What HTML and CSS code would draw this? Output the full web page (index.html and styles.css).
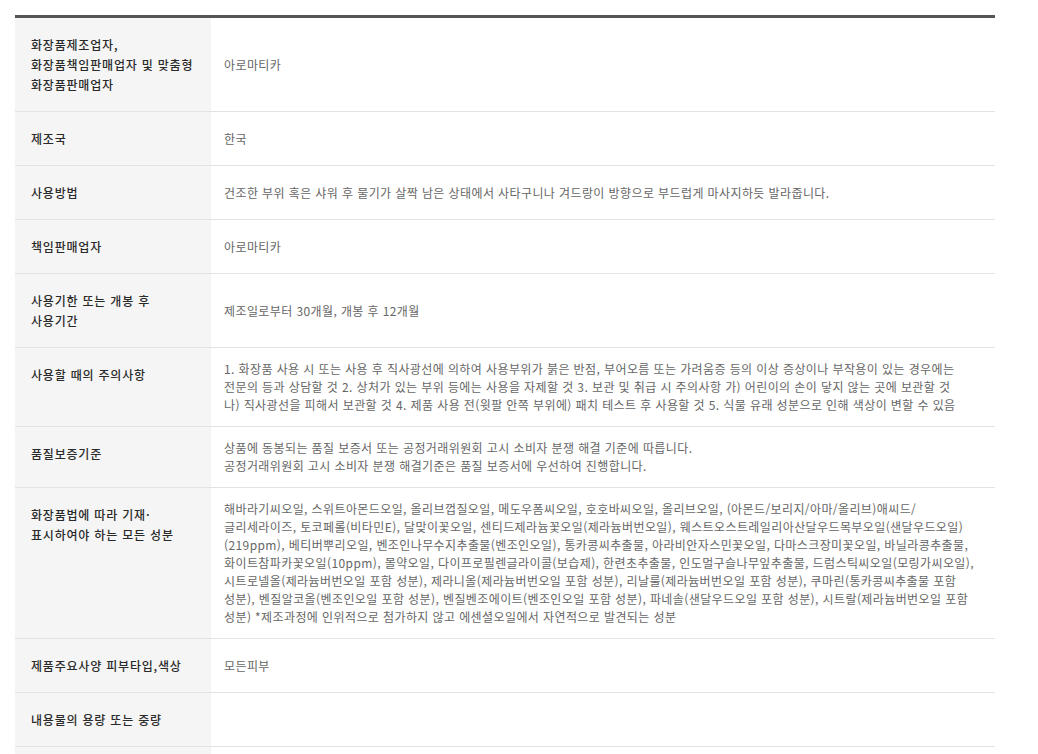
FILE: index.html
```html
<!DOCTYPE html>
<html lang="ko">
<head>
    <meta charset="UTF-8">
    <meta name="viewport" content="width=device-width, initial-scale=1.0">
    <title>상품정보제공고시</title>
    <link rel="stylesheet" href="styles.css">
</head>
<body>
    <div class="container">
        <table class="info-table">
            <tr>
                <th>화장품제조업자,<br>화장품책임판매업자 및 맞춤형<br>화장품판매업자</th>
                <td>아로마티카</td>
            </tr>
            <tr>
                <th>제조국</th>
                <td>한국</td>
            </tr>
            <tr>
                <th>사용방법</th>
                <td>건조한 부위 혹은 샤워 후 물기가 살짝 남은 상태에서 사타구니나 겨드랑이 방향으로 부드럽게 마사지하듯 발라줍니다.</td>
            </tr>
            <tr>
                <th>책임판매업자</th>
                <td>아로마티카</td>
            </tr>
            <tr>
                <th>사용기한 또는 개봉 후<br>사용기간</th>
                <td>제조일로부터 30개월, 개봉 후 12개월</td>
            </tr>
            <tr>
                <th>사용할 때의 주의사항</th>
                <td>1. 화장품 사용 시 또는 사용 후 직사광선에 의하여 사용부위가 붉은 반점, 부어오름 또는 가려움증 등의 이상 증상이나 부작용이 있는 경우에는<br>전문의 등과 상담할 것 2. 상처가 있는 부위 등에는 사용을 자제할 것 3. 보관 및 취급 시 주의사항 가) 어린이의 손이 닿지 않는 곳에 보관할 것<br>나) 직사광선을 피해서 보관할 것 4. 제품 사용 전(윗팔 안쪽 부위에) 패치 테스트 후 사용할 것 5. 식물 유래 성분으로 인해 색상이 변할 수 있음</td>
            </tr>
            <tr>
                <th>품질보증기준</th>
                <td>상품에 동봉되는 품질 보증서 또는 공정거래위원회 고시 소비자 분쟁 해결 기준에 따릅니다.<br>공정거래위원회 고시 소비자 분쟁 해결기준은 품질 보증서에 우선하여 진행합니다.</td>
            </tr>
            <tr>
                <th>화장품법에 따라 기재·<br>표시하여야 하는 모든 성분</th>
                <td>해바라기씨오일, 스위트아몬드오일, 올리브껍질오일, 메도우폼씨오일, 호호바씨오일, 올리브오일, (아몬드/보리지/아마/올리브)애씨드/<br>글리세라이즈, 토코페롤(비타민E), 달맞이꽃오일, 센티드제라늄꽃오일(제라늄버번오일), 웨스트오스트레일리아산달우드목부오일(샌달우드오일)<br>(219ppm), 베티버뿌리오일, 벤조인나무수지추출물(벤조인오일), 통카콩씨추출물, 아라비안자스민꽃오일, 다마스크장미꽃오일, 바닐라콩추출물,<br>화이트참파카꽃오일(10ppm), 몰약오일, 다이프로필렌글라이콜(보습제), 한련초추출물, 인도멀구슬나무잎추출물, 드럼스틱씨오일(모링가씨오일),<br>시트로넬올(제라늄버번오일 포함 성분), 제라니올(제라늄버번오일 포함 성분), 리날룰(제라늄버번오일 포함 성분), 쿠마린(통카콩씨추출물 포함<br>성분), 벤질알코올(벤조인오일 포함 성분), 벤질벤조에이트(벤조인오일 포함 성분), 파네솔(샌달우드오일 포함 성분), 시트랄(제라늄버번오일 포함<br>성분) *제조과정에 인위적으로 첨가하지 않고 에센셜오일에서 자연적으로 발견되는 성분</td>
            </tr>
            <tr>
                <th>제품주요사양 피부타입,색상</th>
                <td>모든피부</td>
            </tr>
            <tr>
                <th>내용물의 용량 또는 중량</th>
                <td></td>
            </tr>
            <tr>
                <th>&nbsp;</th>
                <td></td>
            </tr>
        </table>
    </div>
</body>
</html>
```

FILE: styles.css
```css
body {
    margin: 0;
    padding: 0;
    background-color: #fff;
    font-family: "Noto Sans CJK KR", "Noto Sans", sans-serif;
}

.container {
    width: 980px;
    padding: 15px 0 0 15px;
}

.info-table {
    width: 100%;
    border-collapse: collapse;
    border-top: 3px solid #555;
    table-layout: fixed;
}

.info-table th {
    width: 196px;
    box-sizing: border-box;
    padding: 17px 10px 16px 16px;
    background-color: #f5f5f5;
    color: #2a2a2a;
    font-size: 12px;
    font-weight: 500;
    line-height: 20px;
    letter-spacing: 0.8px;
    text-align: left;
    vertical-align: top;
    border-bottom: 1px solid #e3e3e3;
    word-break: keep-all;
    white-space: nowrap;
}

.info-table td {
    padding: 12px 13px;
    color: #666;
    font-size: 12px;
    line-height: 18px;
    letter-spacing: 0.4px;
    vertical-align: middle;
    border-bottom: 1px solid #e3e3e3;
    white-space: nowrap;
}
```
